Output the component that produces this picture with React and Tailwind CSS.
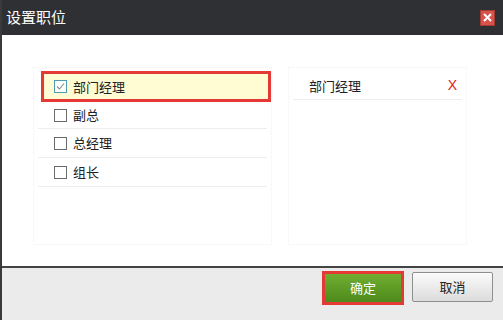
const positions = [
  { name: '部门经理', checked: true },
  { name: '副总', checked: false },
  { name: '总经理', checked: false },
  { name: '组长', checked: false },
];

function Checkbox({ checked }) {
  if (checked) {
    return (
      <span className="w-[13px] h-[13px] border border-[#4d9bb5] bg-white flex items-center justify-center shrink-0">
        <svg width="9" height="9" viewBox="0 0 9 9">
          <path d="M1 4.5 L3.5 7 L8 1.5" fill="none" stroke="#8a8a8a" strokeWidth="1.1" />
        </svg>
      </span>
    );
  }
  return <span className="w-[13px] h-[13px] border border-[#6b6b6b] bg-white shrink-0" />;
}

export default function App() {
  return (
    <div
      className="w-[503px] h-[320px] flex flex-col border-l-2 border-[#3a3a3a] overflow-hidden"
      style={{ fontFamily: '"Noto Sans CJK SC", "Noto Sans", sans-serif' }}
    >
      <div className="h-[35px] bg-[#2f3034] flex items-center justify-between pl-1 pr-[8px]">
        <span className="text-white text-[15px]">设置职位</span>
        <button className="w-[15px] h-[16px] bg-[#d9534a] border border-[#a33a33] flex items-center justify-center">
          <svg width="9" height="9" viewBox="0 0 9 9">
            <path d="M1 1 L8 8 M8 1 L1 8" stroke="#fff" strokeWidth="2" />
          </svg>
        </button>
      </div>

      <div className="flex-1 bg-white flex gap-[16px] pl-[31px] pt-[32px]">
        <div className="w-[239px] h-[178px] border border-dotted border-[#f1f1f1] pt-[3px]">
          {positions.map((p, i) =>
            p.checked ? (
              <div
                key={p.name}
                className="ml-[7px] h-[31px] border-[3px] border-[#e53935] bg-[#fffbd2] flex items-center gap-[6px] pl-[10px] text-[13px] text-[#222]"
              >
                <Checkbox checked />
                <span>{p.name}</span>
              </div>
            ) : (
              <div
                key={p.name}
                className={`mx-[4px] ${i === 1 ? 'h-[27px]' : 'h-[29px]'} border-b border-[#f1eded] flex items-center gap-[6px] pl-[16px] text-[13px] text-[#222]`}
              >
                <Checkbox />
                <span>{p.name}</span>
              </div>
            )
          )}
        </div>

        <div className="w-[179px] h-[178px] border border-dotted border-[#f1f1f1]">
          <div className="mx-[4px] mt-[4px] h-[28px] border-b border-[#f1eded] flex items-center justify-between pl-[16px] pr-[5px] text-[13px] text-[#222]">
            <span>部门经理</span>
            <span className="text-[#e02020] text-[14px]" style={{ fontFamily: '"Liberation Sans", sans-serif' }}>
              X
            </span>
          </div>
        </div>
      </div>

      <div className="h-[54px] border-t-2 border-[#444] bg-[#ebebeb] flex items-start justify-end gap-[8px] pr-[10px] pt-[3px]">
        <button className="w-[82px] h-[34px] border-[3px] border-[#e53935] bg-gradient-to-b from-[#70ae31] to-[#4d8a1c] text-white text-[13px] flex items-center justify-center">
          确定
        </button>
        <button className="mt-[1px] w-[81px] h-[30px] border border-[#8f8f8f] rounded-[2px] bg-gradient-to-b from-[#fbfbfb] to-[#dcdcdc] text-[#222] text-[13px] flex items-center justify-center">
          取消
        </button>
      </div>
    </div>
  );
}
